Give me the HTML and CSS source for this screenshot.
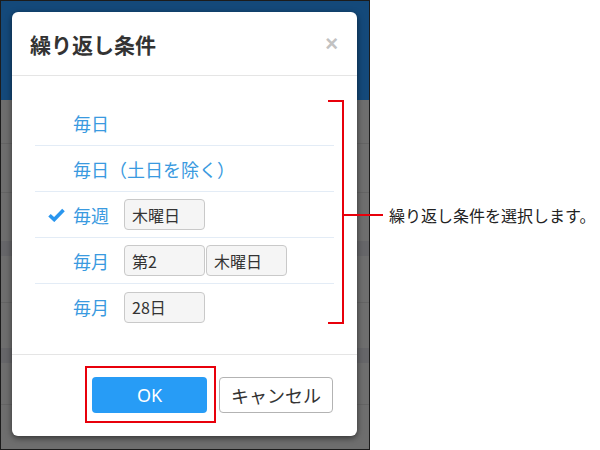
FILE: index.html
```html
<!DOCTYPE html>
<html lang="ja">
<head>
<meta charset="utf-8">
<link rel="stylesheet" href="styles.css">
</head>
<body>
<div class="page">
  <div class="shot">
    <div class="modal">
      <div class="modal-header">
        <span class="title">繰り返し条件</span>
        <span class="close">×</span>
      </div>
      <div class="modal-body">
        <div class="row"><span class="check"></span><span class="label">毎日</span></div>
        <div class="row"><span class="check"></span><span class="label">毎日（土日を除く）</span></div>
        <div class="row">
          <span class="check"><svg width="17" height="14" viewBox="0 0 17 14"><path d="M1.5 7.2 L6.2 11.6 L15.5 2" fill="none" stroke="#2a96ee" stroke-width="3.6"/></svg></span>
          <span class="label">毎週</span>
          <span class="box">木曜日</span>
        </div>
        <div class="row">
          <span class="check"></span><span class="label">毎月</span>
          <span class="box">第2</span><span class="box box2">木曜日</span>
        </div>
        <div class="row last">
          <span class="check"></span><span class="label">毎月</span>
          <span class="box">28日</span>
        </div>
      </div>
      <div class="modal-footer">
        <button class="btn ok">OK</button>
        <button class="btn cancel">キャンセル</button>
      </div>
    </div>
  </div>
  <div class="okmark"></div>
  <div class="callout">
    <div class="bracket"></div>
    <div class="leader"></div>
    <span class="note">繰り返し条件を選択します。</span>
  </div>
</div>
</body>
</html>
```
FILE: styles.css
```css
html, body { margin: 0; padding: 0; background: #fff; }
body { font-family: "Noto Sans CJK JP", "Noto Sans", sans-serif; }
.page { position: relative; width: 600px; height: 450px; overflow: hidden; }
.shot {
  width: 370px; height: 450px; box-sizing: border-box;
  border: 1px solid #1c1c1c;
  padding: 11px 0 0 11px;
  background:
    linear-gradient(to bottom,
      #14497a 0, #14497a 99px,
      #6e6e6e 99px, #6e6e6e 142px, #646464 142px, #646464 143px,
      #6e6e6e 143px, #6e6e6e 191px, #646464 191px, #646464 192px,
      #6e6e6e 192px, #6e6e6e 240px, #666669 240px, #666669 255px,
      #6e6e6e 255px, #6e6e6e 301px, #646464 301px, #646464 302px,
      #6e6e6e 302px, #6e6e6e 347px, #666669 347px, #666669 362px,
      #6e6e6e 362px, #6e6e6e 403px, #646464 403px, #646464 404px,
      #6e6e6e 404px);
}
.modal {
  width: 345px; height: 424px; box-sizing: border-box;
  background: #fff; border-radius: 6px;
  box-shadow: 0 2px 6px rgba(0,0,0,0.55);
  display: flex; flex-direction: column;
}
.modal-header {
  height: 64px; box-sizing: border-box;
  border-bottom: 1px solid #e5e5e5;
  display: flex; align-items: center; justify-content: space-between;
  padding: 0 19px 0 18px;
}
.title { font-size: 21px; font-weight: 700; color: #333; }
.close { font-size: 22px; font-weight: 700; color: #c2c2c2; line-height: 1; font-family: "Liberation Sans", sans-serif; }
.modal-body { padding: 24px 23px 24px 23px; }
.row {
  height: 46px; box-sizing: border-box;
  border-bottom: 1px solid #e3ecf6;
  display: flex; align-items: center;
}
.row.last { border-bottom: none; }
.check { width: 38px; flex: none; display: flex; padding-left: 13px; box-sizing: border-box; }
.check svg { display: block; }
.label { width: 51px; flex: none; font-size: 18px; color: #3a9ae0; white-space: nowrap; }
.box {
  width: 81px; height: 31px; box-sizing: border-box;
  border: 1px solid #c9c9c9; border-radius: 4px; background: #f5f5f5;
  font-size: 16px; color: #333; padding-left: 7px;
  display: flex; align-items: center;
}
.box.box2 { margin-left: 1px; width: 81px; }
.modal-footer {
  flex: 1; border-top: 1px solid #e5e5e5;
  display: flex; justify-content: flex-end; align-items: flex-start;
  padding: 22px 24px 0 0; gap: 12px;
}
.btn {
  height: 36px; box-sizing: border-box; border-radius: 4px;
  font-family: "Noto Sans CJK JP", "Noto Sans", sans-serif;
  font-size: 18px; padding: 0; line-height: 1;
}
.ok { width: 115px; background: #279cf6; color: #fff; border: none; font-family: "Noto Sans", sans-serif; }
.cancel { width: 114px; background: #fff; color: #333; border: 1px solid #b3b3b3; }
.okmark {
  position: absolute; left: 85px; top: 366px; width: 131px; height: 57px;
  box-sizing: border-box; border: 2px solid #e8000b;
}
.callout { position: absolute; left: 328px; top: 100px; width: 272px; height: 225px; }
.bracket {
  position: absolute; left: 0; top: 0; width: 16px; height: 224px;
  box-sizing: border-box; border: 2px solid #e8000b; border-left: none;
}
.leader { position: absolute; left: 15px; top: 114px; width: 40px; height: 2px; background: #e8000b; }
.note {
  position: absolute; left: 61px; top: 103px;
  font-size: 16px; color: #222; white-space: nowrap; line-height: 24px;
}
```
